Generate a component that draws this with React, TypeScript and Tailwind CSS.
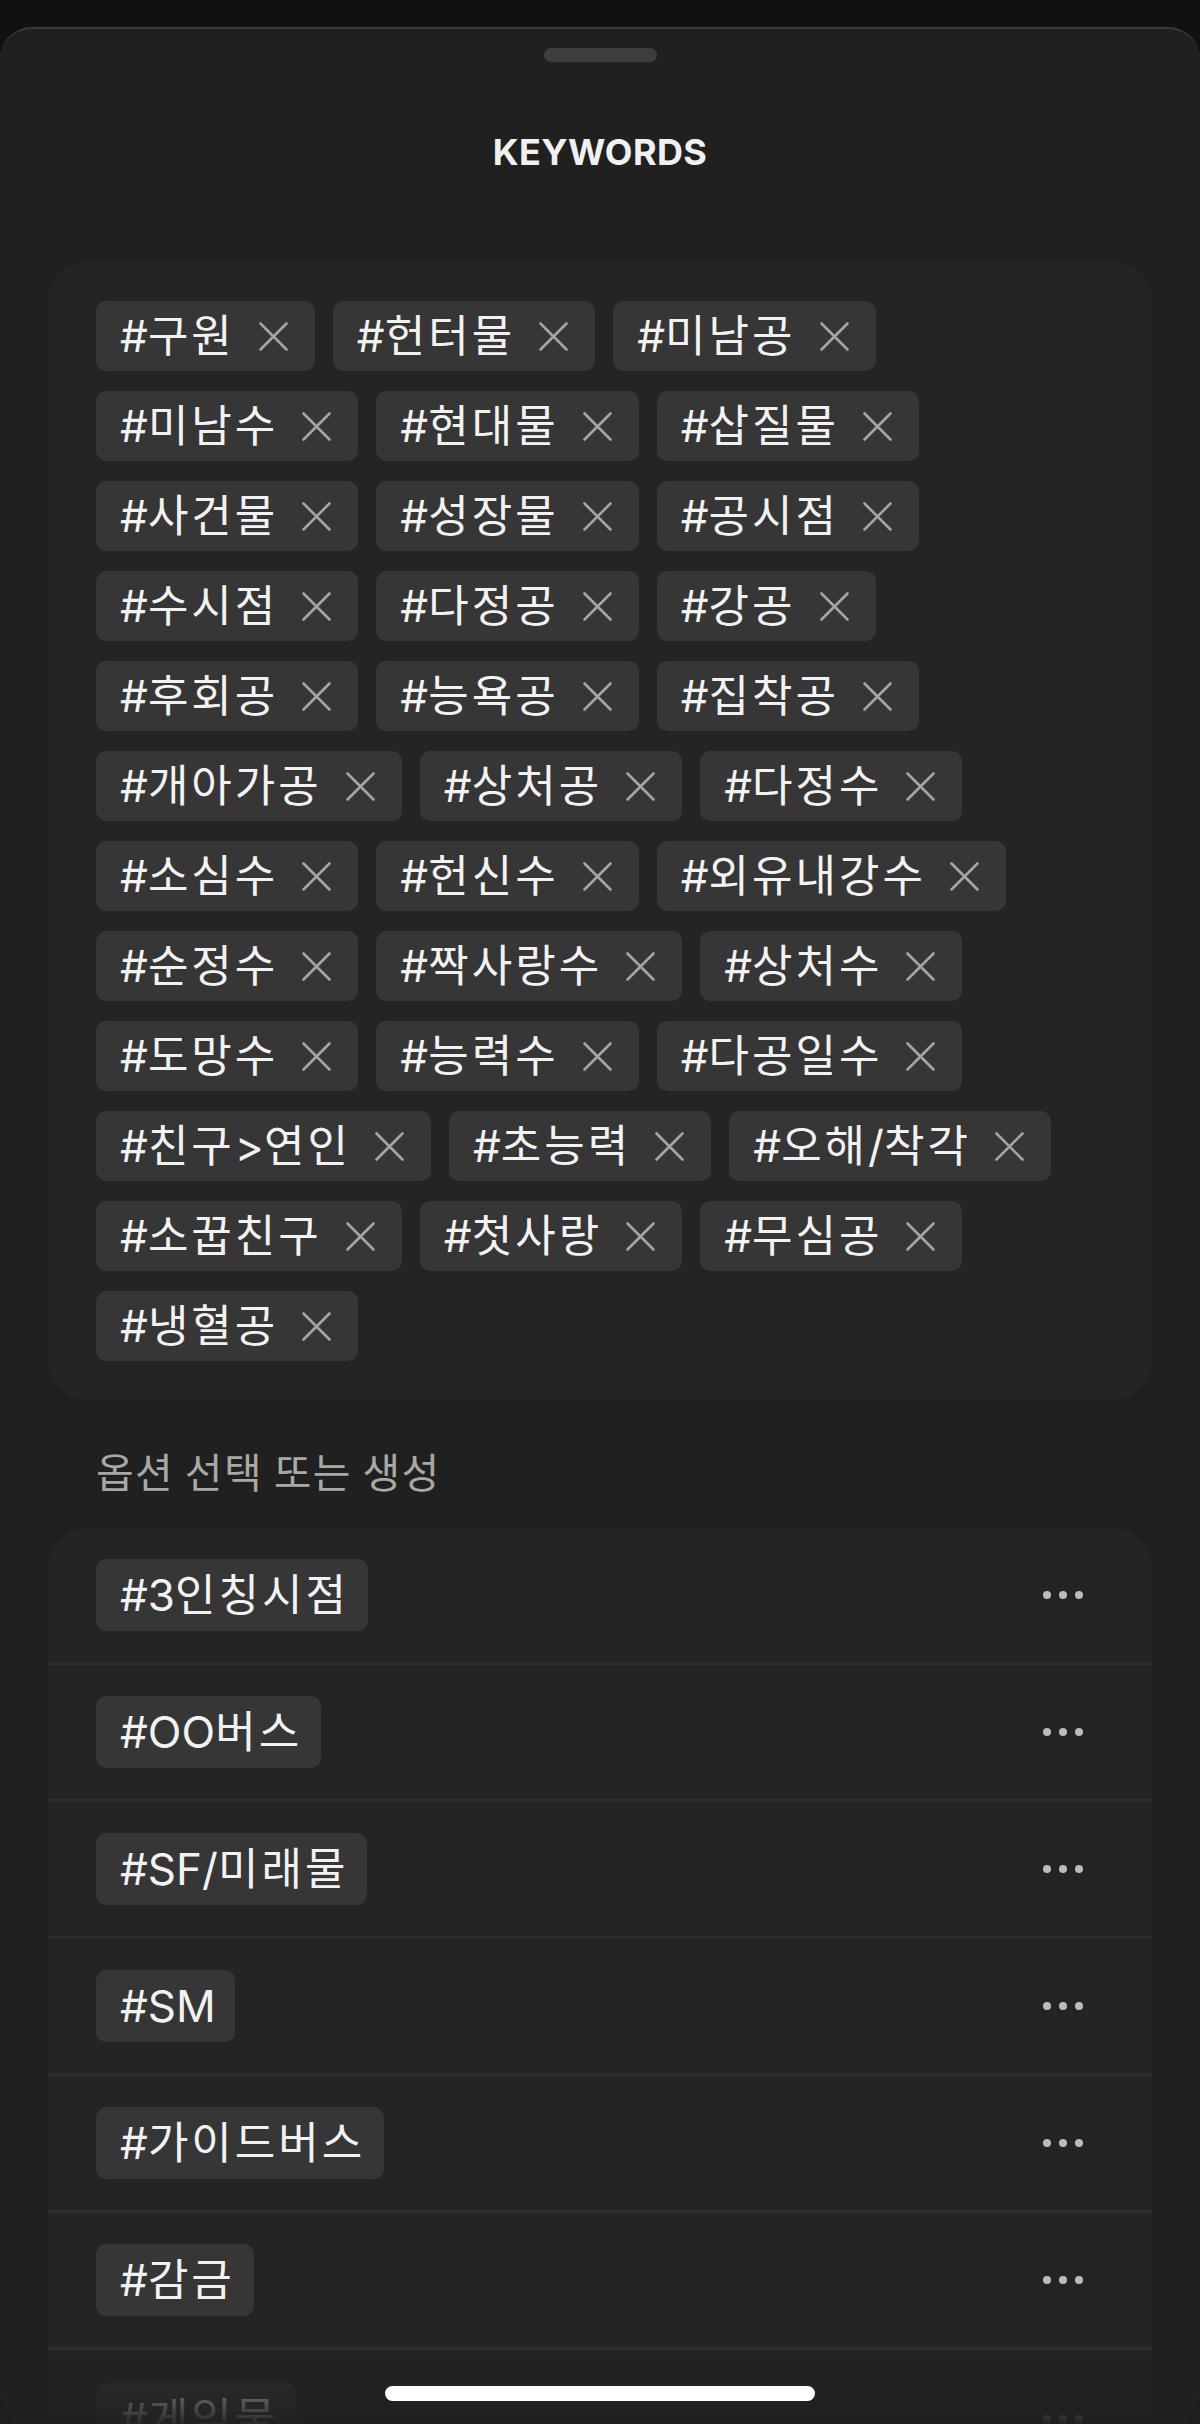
const keywords = [
  '구원', '헌터물', '미남공', '미남수', '현대물', '삽질물', '사건물', '성장물', '공시점',
  '수시점', '다정공', '강공', '후회공', '능욕공', '집착공', '개아가공', '상처공', '다정수',
  '소심수', '헌신수', '외유내강수', '순정수', '짝사랑수', '상처수', '도망수', '능력수', '다공일수',
  '친구>연인', '초능력', '오해/착각', '소꿉친구', '첫사랑', '무심공', '냉혈공',
];

const options = ['3인칭시점', 'OO버스', 'SF/미래물', 'SM', '가이드버스', '감금', '게임물'];

// hangul runs get a little extra spacing, latin stays as is
function Tag({ label }: { label: string }) {
  const parts = ('#' + label).split(/([가-힣]+)/).filter(Boolean);
  return (
    <span className="text-[44px] leading-none text-[#f2f2f2]">
      {parts.map((p, i) =>
        /[가-힣]/.test(p) ? (
          <span key={i} className="tracking-[3px]">{p}</span>
        ) : (
          <span key={i}>{p}</span>
        )
      )}
    </span>
  );
}

function CloseIcon() {
  return (
    <svg width="29" height="29" viewBox="0 0 29 29" className="ml-[24px] shrink-0">
      <path d="M1.5 1.5 27.5 27.5 M27.5 1.5 1.5 27.5" stroke="#a6a59f" strokeWidth="2.6" strokeLinecap="round" />
    </svg>
  );
}

function KeywordChip({ label }: { label: string }) {
  return (
    <div className="flex h-[70px] items-center rounded-[10px] bg-[#363636] pl-[24px] pr-[27px]">
      <Tag label={label} />
      <CloseIcon />
    </div>
  );
}

function OptionRow({ label }: { label: string }) {
  return (
    <div className="flex h-[137px] items-center justify-between pl-[48px] pr-[69px]">
      <div className="flex h-[72px] items-center rounded-[10px] bg-[#363636] pl-[24px] pr-[19px]">
        <Tag label={label} />
      </div>
      <div className="flex items-center gap-[8px]">
        <div className="h-[8px] w-[8px] rounded-full bg-[#bdbcb6]" />
        <div className="h-[8px] w-[8px] rounded-full bg-[#bdbcb6]" />
        <div className="h-[8px] w-[8px] rounded-full bg-[#bdbcb6]" />
      </div>
    </div>
  );
}

export default function App() {
  return (
    <div className="relative h-[2424px] w-[1200px] overflow-hidden bg-[#111111] font-[Inter,'Noto_Sans_CJK_KR',sans-serif]">
      <div className="mt-[27px] h-[2413px] overflow-hidden rounded-t-[32px] rounded-b-[52px] border-t-2 border-[#3a3a3a] bg-[#202020] pt-[19px]">
        {/* grabber */}
        <div className="mx-auto h-[14px] w-[113px] rounded-full bg-[#3d3d3d]" />

        <h1 className="mt-[72px] text-center text-[36px] font-bold leading-[36px] tracking-[0.01em] text-[#f0f0f0]">
          KEYWORDS
        </h1>

        {/* selected keywords */}
        <div className="mx-[48px] mt-[91px] flex flex-wrap gap-x-[18px] gap-y-[20px] rounded-[40px] bg-[#242424] px-[48px] pb-[39px] pt-[40px]">
          {keywords.map((k) => (
            <KeywordChip key={k} label={k} />
          ))}
        </div>

        <div className="mt-[48px] px-[96px] font-['Noto_Sans_CJK_KR',sans-serif] text-[41px] leading-[44px] tracking-[1.4px] text-[#a9a8a3]">
          옵션 선택 또는 생성
        </div>

        {/* options list */}
        <div className="mx-[48px] mt-[36px] flex flex-col divide-y-[3px] divide-[#2c2c2c] rounded-t-[40px] bg-[#242424]">
          {options.map((o) => (
            <OptionRow key={o} label={o} />
          ))}
        </div>
      </div>

      {/* bottom fade */}
      <div className="absolute bottom-0 left-0 h-[72px] w-full bg-gradient-to-b from-[#202020]/30 to-[#202020]/95" />

      {/* home indicator */}
      <div className="absolute left-[385px] top-[2386px] h-[15px] w-[430px] rounded-full bg-white" />
    </div>
  );
}
